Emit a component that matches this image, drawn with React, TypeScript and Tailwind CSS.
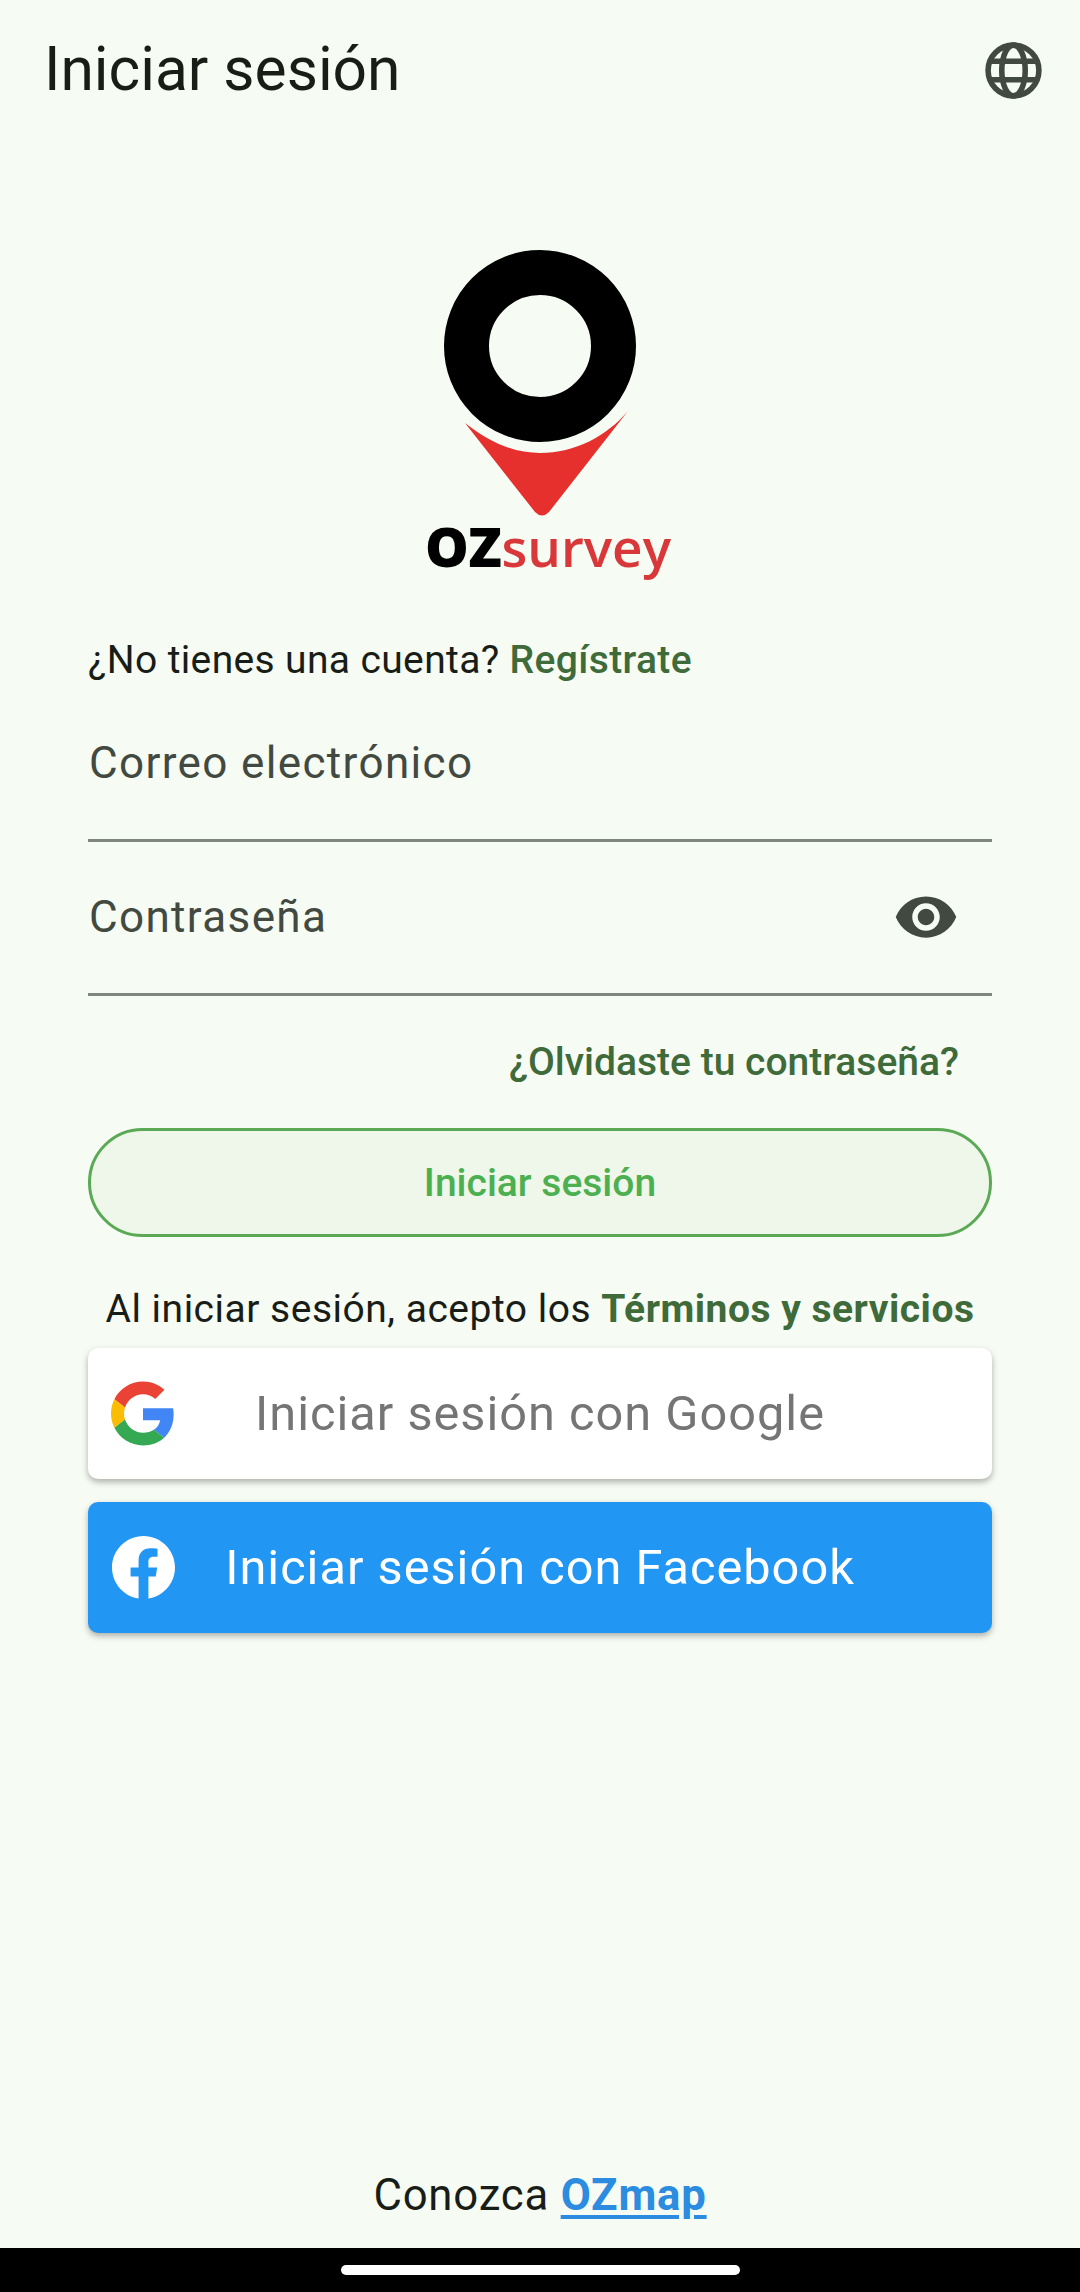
import { MdVisibility } from 'react-icons/md';
import { FaFacebook } from 'react-icons/fa';

function LogoPin() {
  return (
    <svg width="200" height="270" viewBox="0 0 200 270">
      <circle cx="100" cy="98" r="73.5" fill="none" stroke="#000" strokeWidth="45" />
      <path
        d="M25 175 C50 195 75 205 100 205 C135 205 167 188 188 163 L109 264 Q102 271 95 264 Z"
        fill="#e5302e"
      />
    </svg>
  );
}

function GlobeIcon() {
  return (
    <svg width="67" height="67" viewBox="0 0 24 24" fill="none" stroke="#424940" strokeWidth="2">
      <circle cx="12" cy="12" r="9.1" />
      <ellipse cx="12" cy="12" rx="4.2" ry="9.1" />
      <path d="M3.4 8.7h17.2M3.4 15.3h17.2" />
    </svg>
  );
}

function GoogleIcon() {
  return (
    <svg width="64" height="65" viewBox="0 0 48 48">
      <path fill="#EA4335" d="M24 9.5c3.54 0 6.71 1.22 9.21 3.6l6.85-6.85C35.9 2.38 30.47 0 24 0 14.62 0 6.51 5.38 2.56 13.22l7.98 6.19C12.43 13.72 17.74 9.5 24 9.5z" />
      <path fill="#4285F4" d="M46.98 24.55c0-1.57-.15-3.09-.38-4.55H24v9.02h12.94c-.58 2.96-2.26 5.48-4.78 7.18l7.73 6c4.51-4.18 7.09-10.36 7.09-17.65z" />
      <path fill="#FBBC05" d="M10.53 28.59c-.48-1.45-.76-2.99-.76-4.59s.27-3.14.76-4.59l-7.98-6.19C.92 16.46 0 20.12 0 24c0 3.88.92 7.54 2.56 10.78l7.97-6.19z" />
      <path fill="#34A853" d="M24 48c6.48 0 11.93-2.13 15.89-5.81l-7.73-6c-2.15 1.45-4.92 2.3-8.16 2.3-6.26 0-11.57-4.22-13.47-9.91l-7.98 6.19C6.51 42.62 14.62 48 24 48z" />
    </svg>
  );
}

export default function App() {
  return (
    <div className="flex h-[2292px] w-full flex-col bg-[#f6fbf3] font-['Roboto',sans-serif] text-[#191d17]">
      {/* Header */}
      <header className="flex h-[140px] items-center justify-between pl-[44px] pr-[33px]">
        <h1 className="text-[60.5px] font-normal leading-none">Iniciar sesión</h1>
        <GlobeIcon />
      </header>

      {/* Logo */}
      <div className="mt-[108px] flex flex-col items-center">
        <LogoPin />
        <div className="flex h-[64px] items-baseline pl-[16px] font-['Open_Sans',sans-serif] text-[53px] leading-[55px]">
          <span className="text-[55px] font-extrabold tracking-[-0.5px] text-black">OZ</span>
          <span className="font-semibold text-[#d8383a]">survey</span>
        </div>
      </div>

      <main className="mt-[47px] flex flex-col px-[88px]">
        <p className="flex h-[60px] items-center whitespace-pre pt-[3px] text-[39px] tracking-[0.36px]">
          ¿No tienes una cuenta? <span className="font-medium text-[#3f6a3a]">Regístrate</span>
        </p>

        {/* Fields */}
        <div className="flex h-[153px] items-center border-b-[3px] border-[#7f867c] pb-[2px] pl-[1px] text-[44px] tracking-[1.36px] text-[#424940]">
          Correo electrónico
        </div>
        <div className="flex h-[154px] items-center justify-between border-b-[3px] border-[#7f867c] pb-[2px] pl-[1px] pr-[33px] text-[44px] tracking-[1.36px] text-[#424940]">
          Contraseña
          <MdVisibility className="h-[66px] w-[66px]" />
        </div>

        <div className="mt-[35px] flex h-[60px] items-center justify-end pr-[33px] pt-[2px] text-[39px] font-medium text-[#3f6a3a]">
          ¿Olvidaste tu contraseña?
        </div>

        <button className="mt-[37px] flex h-[109px] items-center justify-center rounded-full border-[3px] border-[#5aa955] bg-[#eff6ea] pt-[2px] text-[39px] font-medium text-[#4caf50]">
          Iniciar sesión
        </button>

        <p className="mt-[41px] flex h-[60px] items-center justify-center whitespace-pre pt-[2px] text-[39px] tracking-[0.5px]">
          Al iniciar sesión, acepto los <span className="font-bold text-[#3f6a3a]">Términos y servicios</span>
        </p>

        {/* Social */}
        <button className="mt-[10px] grid h-[131px] grid-cols-[1fr_auto_1fr] items-center rounded-[10px] bg-white px-[23px] text-[48.7px] tracking-[1px] text-[#757575] shadow-[0_3px_6px_rgba(0,0,0,0.3)]">
          <GoogleIcon />
          <span>Iniciar sesión con Google</span>
        </button>
        <button className="mt-[23px] grid h-[131px] grid-cols-[1fr_auto_1fr] items-center rounded-[10px] bg-[#2196f3] px-[23px] text-[48.7px] tracking-[1px] text-white shadow-[0_3px_6px_rgba(0,0,0,0.3)]">
          <FaFacebook className="h-[65px] w-[65px]" />
          <span>Iniciar sesión con Facebook</span>
        </button>
      </main>

      {/* Footer */}
      <footer className="mt-auto flex h-[90px] items-start justify-center whitespace-pre pt-[12px] text-[43.7px] leading-[50px] tracking-[0.8px]">
        Conozca <span className="font-bold text-[#2b8ce0] underline underline-offset-[5px]">OZmap</span>
      </footer>
      <div className="flex h-[44px] items-start justify-center bg-black pt-[17px]">
        <div className="h-[10px] w-[399px] rounded-full bg-white" />
      </div>
    </div>
  );
}
